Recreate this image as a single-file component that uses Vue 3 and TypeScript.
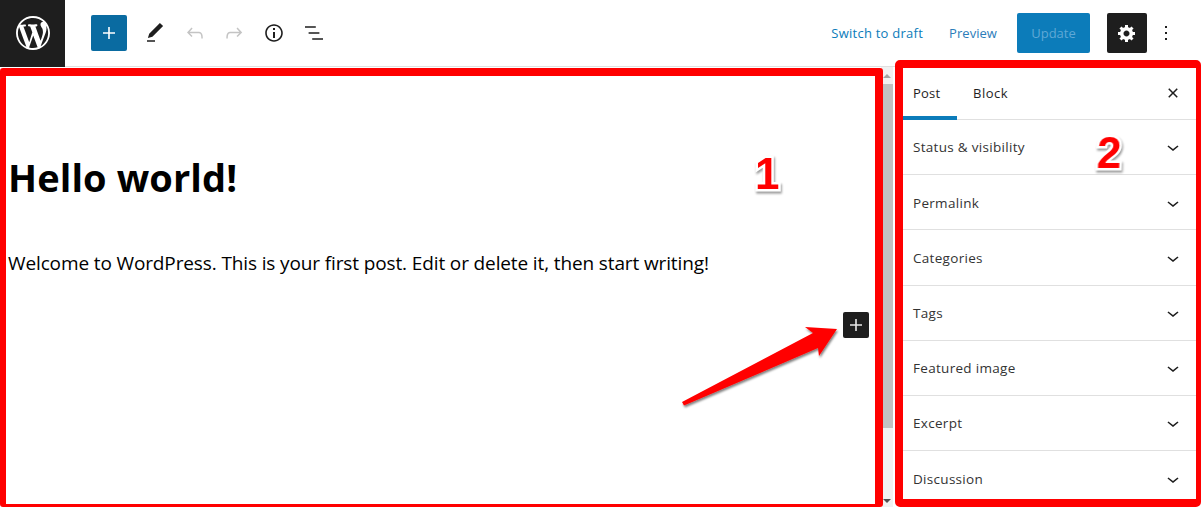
<script setup lang="ts">
// 古腾堡编辑器截图: 顶栏 + 编辑区 + 侧栏, 红框和箭头是截图上的标注
const panels: string[] = [
  'Status & visibility',
  'Permalink',
  'Categories',
  'Tags',
  'Featured image',
  'Excerpt',
  'Discussion',
]

const tools: { d: string; muted?: boolean }[] = [
  { d: 'M20.1 5.1L16.9 2 6.2 12.7l-1.3 4.4 4.5-1.3L20.1 5.1zM4 20.8h8v-1.5H4v1.5z' },
  { d: 'M18.3 11.7c-.6-.6-1.4-.9-2.3-.9H6.7l2.9-3.3-1.1-1-4.5 5L8.5 16l1-1-2.7-2.7H16c.5 0 .9.2 1.3.5 1 1 1 3.4 1 4.5v.3h1.5v-.2c0-1.5 0-4.3-1.5-5.7z', muted: true },
  { d: 'M15.6 6.5l-1.1 1 2.9 3.3H8c-.9 0-1.7.3-2.3.9-1.4 1.5-1.4 4.2-1.4 5.6v.2h1.5v-.3c0-1.1 0-3.5 1-4.5.3-.3.7-.5 1.3-.5h9.2L14.5 15l1.1 1.1 4.6-4.6-4.6-5z', muted: true },
  { d: 'M12 3.2c-4.8 0-8.8 3.9-8.8 8.8 0 4.8 3.9 8.8 8.8 8.8 4.8 0 8.8-3.9 8.8-8.8 0-4.8-4-8.8-8.8-8.8zm0 16c-4 0-7.2-3.3-7.2-7.2C4.8 8 8 4.8 12 4.8s7.2 3.3 7.2 7.2c0 4-3.2 7.2-7.2 7.2zM11 17h2v-6h-2v6zm0-8h2V7h-2v2z' },
  { d: 'M13.8 5.2H3v1.5h10.8V5.2zm-3.6 12v1.5H21v-1.5H10.2zm7.2-6H6.6v1.5h10.8v-1.5z' },
]

const plus = 'M18 11.2h-5.2V6h-1.6v5.2H6v1.6h5.2V18h1.6v-5.2H18z'
const chevron = 'M17.5 11.6L12 16l-5.5-4.4.9-1.2L12 14l4.5-3.6 1 1.2z'
</script>

<template>
  <div class="page">
    <header class="topbar">
      <a class="logo">
        <svg width="34" height="34" viewBox="0 0 20 20" fill="#fff">
          <path d="M20 10c0-5.51-4.49-10-10-10C4.48 0 0 4.49 0 10c0 5.52 4.48 10 10 10 5.51 0 10-4.48 10-10zM7.78 15.37L4.37 6.22c.55-.02 1.17-.08 1.17-.08.5-.06.44-1.13-.06-1.11 0 0-1.45.11-2.37.11-.18 0-.37 0-.58-.01C4.12 2.69 6.87 1.11 10 1.11c2.33 0 4.45.87 6.05 2.34-.68-.11-1.65.39-1.65 1.58 0 .74.45 1.36.9 2.1.35.61.55 1.36.55 2.46 0 1.49-1.4 5-1.4 5l-3.03-8.37c.54-.02.82-.17.82-.17.5-.05.44-1.25-.06-1.22 0 0-1.44.12-2.38.12-.87 0-2.33-.12-2.33-.12-.5-.03-.56 1.2-.06 1.22l.92.08 1.26 3.41zM17.41 10c.24-.64.74-1.87.43-4.25.7 1.29 1.05 2.71 1.05 4.25 0 3.29-1.73 6.24-4.4 7.78.97-2.59 1.94-5.2 2.92-7.78zM6.1 18.09C3.12 16.65 1.11 13.53 1.11 10c0-1.3.23-2.48.72-3.59C3.25 10.3 4.67 14.2 6.1 18.09zm4.03-6.63l2.58 6.98c-.86.29-1.76.45-2.71.45-.79 0-1.57-.11-2.29-.33.81-2.38 1.62-4.74 2.42-7.1z" />
        </svg>
      </a>
      <button class="inserter">
        <svg width="24" height="24" viewBox="0 0 24 24" fill="#fff"><path :d="plus" /></svg>
      </button>
      <div class="tools">
        <svg
          v-for="t in tools"
          :key="t.d"
          width="24"
          height="24"
          viewBox="0 0 24 24"
          :fill="t.muted ? '#c4c4c4' : '#1e1e1e'"
        >
          <path :d="t.d" />
        </svg>
      </div>
      <div class="actions">
        <a class="link draft">Switch to draft</a>
        <a class="link preview">Preview</a>
        <button class="update">Update</button>
        <button class="settings">
          <svg width="24" height="24" viewBox="-2 -2 24 24" fill="#fff">
            <path d="M18 12h-2.18c-.17.7-.44 1.35-.81 1.93l1.54 1.54-2.1 2.1-1.54-1.54c-.58.36-1.23.63-1.91.79V19H8v-2.18c-.68-.16-1.33-.43-1.91-.79l-1.54 1.54-2.12-2.12 1.54-1.54c-.36-.58-.63-1.23-.79-1.91H1V9.03h2.17c.16-.7.44-1.35.8-1.94L2.43 5.55l2.1-2.1 1.54 1.54c.58-.37 1.24-.64 1.93-.81V2h3v2.18c.68.16 1.33.43 1.91.79l1.54-1.54 2.12 2.12-1.54 1.54c.36.59.64 1.24.8 1.94H18V12zm-8.5 1.5c1.66 0 3-1.34 3-3s-1.34-3-3-3-3 1.34-3 3 1.34 3 3 3z" />
          </svg>
        </button>
        <svg class="more" width="24" height="24" viewBox="0 0 24 24" fill="#1e1e1e">
          <path d="M13 19h-2v-2h2v2zm0-6h-2v-2h2v2zm0-6h-2V5h2v2z" />
        </svg>
      </div>
    </header>

    <div class="body">
      <main class="editor">
        <h1 class="title">Hello world!</h1>
        <p class="para">Welcome to WordPress. This is your first post. Edit or delete it, then start writing!</p>
        <button class="block-add">
          <svg width="24" height="24" viewBox="0 0 24 24" fill="#e8e8e8"><path :d="plus" /></svg>
        </button>
      </main>

      <div class="scrollbar">
        <span class="arrow up"></span>
        <span class="thumb"></span>
        <span class="arrow down"></span>
      </div>

      <aside class="sidebar">
        <div class="tabs">
          <span class="tab active">Post</span>
          <span class="tab">Block</span>
          <svg class="close" width="24" height="24" viewBox="0 0 24 24" fill="#1e1e1e">
            <path d="M12 13.06l3.712 3.713 1.061-1.06L13.061 12l3.712-3.712-1.06-1.06L12 10.938 8.288 7.227l-1.061 1.06L10.939 12l-3.712 3.712 1.06 1.061L12 13.061z" />
          </svg>
        </div>
        <div v-for="name in panels" :key="name" class="panel">
          <span>{{ name }}</span>
          <svg width="24" height="24" viewBox="0 0 24 24" fill="#1e1e1e"><path :d="chevron" /></svg>
        </div>
      </aside>
    </div>

    <!-- 标注层 -->
    <div class="frame frame-1"></div>
    <div class="frame frame-2"></div>
    <span class="mark mark-1">1</span>
    <span class="mark mark-2">2</span>
    <svg class="pointer" width="170" height="90" viewBox="675 322 170 90">
      <defs>
        <filter id="sh" x="-10%" y="-10%" width="120%" height="130%">
          <feDropShadow dx="1" dy="2" stdDeviation="1" flood-color="#000" flood-opacity="0.5" />
        </filter>
      </defs>
      <polygon points="682,402 813,333 805,327 837,329 819,356 818,348 684,405.5" fill="#f00" filter="url(#sh)" />
    </svg>
  </div>
</template>

<style scoped>
.page {
  position: relative;
  width: 1201px;
  height: 507px;
  overflow: hidden;
  background: #fff;
  color: #1e1e1e;
  font-family: "Open Sans", "Noto Sans", sans-serif;
}

.topbar {
  display: flex;
  align-items: center;
  height: 67px;
  border-bottom: 1px solid #e0e0e0;
  box-sizing: border-box;
}
.logo {
  display: flex;
  align-items: center;
  justify-content: center;
  width: 65px;
  height: 67px;
  background: #1e1e1e;
}
.inserter {
  display: flex;
  align-items: center;
  justify-content: center;
  width: 36px;
  height: 36px;
  margin-left: 26px;
  padding: 0;
  border: 0;
  border-radius: 2px;
  background: #0a6ba1;
}
.tools {
  display: flex;
  gap: 15.7px;
  margin-left: 16px;
}
.actions {
  display: flex;
  align-items: center;
  margin-left: auto;
  padding-right: 23px;
}
.link {
  color: #0c7cba;
  font-size: 13px;
  letter-spacing: 0.25px;
}
.preview {
  margin-left: 26px;
  color: #2c7dba;
  letter-spacing: 0.05px;
}
.update {
  width: 73px;
  height: 40px;
  margin-left: 20px;
  padding: 0;
  border: 0;
  border-radius: 2px;
  background: #0c7cba;
  color: #5fa8d6;
  font: inherit;
  font-size: 13px;
}
.settings {
  display: flex;
  align-items: center;
  justify-content: center;
  width: 40px;
  height: 40px;
  margin-left: 17px;
  padding: 0;
  border: 0;
  border-radius: 2px;
  background: #1e1e1e;
}
.more {
  margin-left: 7px;
}

.body {
  display: flex;
  height: 440px;
}
.editor {
  position: relative;
  width: 881px;
  padding: 0 0 0 8px;
  box-sizing: border-box;
  flex: none;
}
.title {
  margin: 84px 0 0;
  color: #000;
  font-family: "Open Sans", sans-serif;
  font-size: 38px;
  line-height: 52px;
  font-weight: 700;
  letter-spacing: 0.1px;
}
.para {
  margin: 46px 0 0;
  color: #000;
  font-size: 19px;
  line-height: 28px;
  letter-spacing: -0.125px;
  white-space: nowrap;
}
.block-add {
  position: absolute;
  left: 843px;
  top: 245px;
  display: flex;
  align-items: center;
  justify-content: center;
  width: 26px;
  height: 26px;
  padding: 0;
  border: 0;
  border-radius: 2px;
  background: #1e1e1e;
}

.scrollbar {
  display: flex;
  flex-direction: column;
  align-items: center;
  width: 12px;
  flex: none;
  background: #f1f1f1;
}
.thumb {
  display: block;
  width: 100%;
  height: 344px;
  margin-top: 6px;
  background: #c1c1c1;
}
.arrow {
  width: 0;
  height: 0;
  border-left: 4px solid transparent;
  border-right: 4px solid transparent;
}
.arrow.up {
  margin-top: 7px;
  border-bottom: 4px solid #a3a3a3;
}
.arrow.down {
  margin-top: auto;
  margin-bottom: 4px;
  border-top: 4px solid #505050;
}

.sidebar {
  flex: 1;
  margin-left: 2px;
  padding-left: 8px;
  font-size: 13.5px;
  letter-spacing: 0.3px;
}
.tabs {
  display: flex;
  align-items: center;
  height: 52px;
  margin-right: 5px;
  margin-top: 1px;
  border-bottom: 1px solid #e0e0e0;
  box-sizing: border-box;
}
.tab {
  display: flex;
  align-items: center;
  height: 100%;
  padding: 0 10px 2px;
  box-sizing: border-box;
  font-size: 13px;
  letter-spacing: 0.5px;
}
.tab.active {
  width: 54px;
  padding: 1px 0 0 10px;
  border-bottom: 4px solid #0c7cba;
  margin-right: 6px;
  margin-bottom: -1px;
  height: calc(100% + 1px);
  letter-spacing: 0.2px;
}
.close {
  margin-left: auto;
  margin-right: 11px;
  margin-bottom: 2px;
}
.panel {
  display: flex;
  align-items: center;
  justify-content: space-between;
  height: 55.2px;
  margin-right: 5px;
  padding: 0.8px 11px 0 10px;
  border-bottom: 1px solid #e0e0e0;
  box-sizing: border-box;
  color: #333;
}
.panel:last-child {
  border-bottom: 0;
}

.frame {
  position: absolute;
  box-sizing: border-box;
  border: 0 solid #f00;
  pointer-events: none;
}
.frame-1 {
  left: 0;
  top: 68px;
  width: 883px;
  height: 439px;
  border-width: 8px 8px 3px 6px;
  border-radius: 3px;
}
.frame-2 {
  left: 895px;
  top: 60px;
  width: 306px;
  height: 447px;
  border-width: 8px 5px 8px 8px;
  border-radius: 5px;
}
.mark {
  position: absolute;
  color: #f00;
  font-family: "Liberation Sans", sans-serif;
  font-weight: 700;
  font-size: 44px;
  line-height: 44px;
  -webkit-text-stroke: 5px #fff;
  paint-order: stroke fill;
  filter: drop-shadow(1px 2px 1px rgba(0, 0, 0, 0.4));
}
.mark-1 {
  left: 755px;
  top: 152px;
}
.mark-2 {
  left: 1097px;
  top: 131px;
  transform: skewX(-2deg);
}
.pointer {
  position: absolute;
  left: 675px;
  top: 322px;
}
</style>

<style>
html, body {
  margin: 0;
  overflow: hidden;
}
</style>
